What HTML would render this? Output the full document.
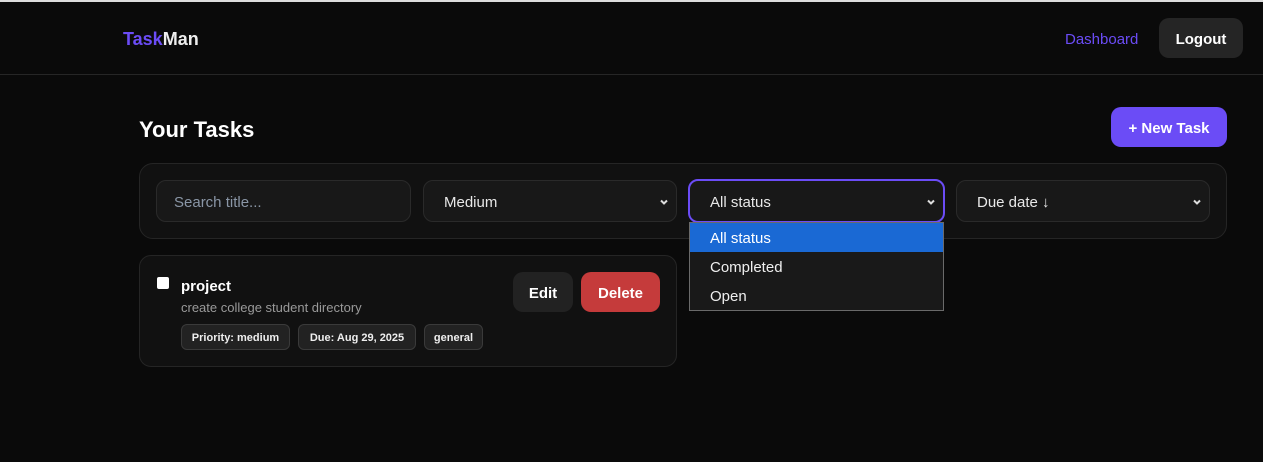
<!DOCTYPE html>
<html><head><style>
*{box-sizing:border-box;margin:0;padding:0}
body{width:1263px;height:462px;background:#0a0a0a;font-family:"Liberation Sans",sans-serif;color:#eee;position:relative;overflow:hidden}
.a{position:absolute}
.hdr{left:0;top:0;width:1263px;height:75px;border-bottom:1px solid #262626;border-top:2px solid #ddd}
.logo{left:123px;top:29px;font-size:18px;font-weight:bold}
.btn{display:flex;align-items:center;justify-content:center;border-radius:10px;font-weight:bold;font-size:15px;color:#fff;padding-top:2px}
.field{background:#181818;border:1px solid #2a2a2a;border-radius:10px;font-size:15px;color:#e8e8e8;display:flex;align-items:center;padding-left:20px;padding-top:3px}
.chev{position:absolute;right:7px;top:50%;margin-top:-4px;width:10px;height:10px}
.tag{top:324px;height:26px;border:1px solid #3a3a3a;background:#222;border-radius:6px;font-size:11px;font-weight:bold;display:flex;align-items:center;justify-content:center;color:#eee;padding-top:2px}
.opt{position:absolute;left:0;width:100%;height:29px;font-size:15px;padding-left:20px;display:flex;align-items:center;color:#eee;padding-top:2px}
</style></head><body>
<div class="a hdr"></div>
<div class="a logo"><span style="color:#6b4cf6">Task</span>Man</div>
<div class="a" style="left:1065px;top:31px;font-size:15px;color:#6b4cf6">Dashboard</div>
<div class="a btn" style="left:1159px;top:18px;width:84px;height:40px;background:#252525">Logout</div>
<div class="a" style="left:139px;top:117px;font-size:22px;font-weight:bold;color:#fff">Your Tasks</div>
<div class="a btn" style="left:1111px;top:107px;width:116px;height:40px;background:#6b4cf6">+ New Task</div>
<div class="a" style="left:139px;top:163px;width:1088px;height:76px;background:#111;border:1px solid #252525;border-radius:14px"></div>
<div class="a field" style="left:156px;top:180px;width:255px;height:42px;color:#8a96a6;padding-left:17px">Search title...</div>
<div class="a field" style="left:423px;top:180px;width:254px;height:42px">Medium<svg class="chev" viewBox="0 0 10 10"><path d="M2 3.5L5 6.5L8 3.5" stroke="#ddd" stroke-width="2" fill="none"/></svg></div>
<div class="a field" style="left:688px;top:179px;width:257px;height:44px;border:2px solid #6b4cf6;padding-left:20px">All status<svg class="chev" viewBox="0 0 10 10"><path d="M2 3.5L5 6.5L8 3.5" stroke="#ddd" stroke-width="2" fill="none"/></svg></div>
<div class="a field" style="left:956px;top:180px;width:254px;height:42px">Due date ↓<svg class="chev" viewBox="0 0 10 10"><path d="M2 3.5L5 6.5L8 3.5" stroke="#ddd" stroke-width="2" fill="none"/></svg></div>
<div class="a" style="left:689px;top:222px;width:255px;height:89px;background:#191919;border:1px solid #6a6a6a">
<div class="opt" style="top:0;background:#1a69d4;color:#fff">All status</div>
<div class="opt" style="top:29px">Completed</div>
<div class="opt" style="top:58px">Open</div>
</div>
<div class="a" style="left:139px;top:255px;width:538px;height:112px;background:#111;border:1px solid #252525;border-radius:12px"></div>
<div class="a" style="left:157px;top:277px;width:12px;height:12px;background:#fff;border-radius:2px"></div>
<div class="a" style="left:181px;top:278px;font-size:15px;font-weight:bold;color:#fff">project</div>
<div class="a" style="left:181px;top:300px;font-size:13px;color:#9a9a9a">create college student directory</div>
<div class="a tag" style="left:181px;width:109px">Priority: medium</div>
<div class="a tag" style="left:298px;width:118px">Due: Aug 29, 2025</div>
<div class="a tag" style="left:424px;width:59px">general</div>
<div class="a btn" style="left:513px;top:272px;width:60px;height:40px;background:#222">Edit</div>
<div class="a btn" style="left:581px;top:272px;width:79px;height:40px;background:#c53b3b">Delete</div>
</body></html>
